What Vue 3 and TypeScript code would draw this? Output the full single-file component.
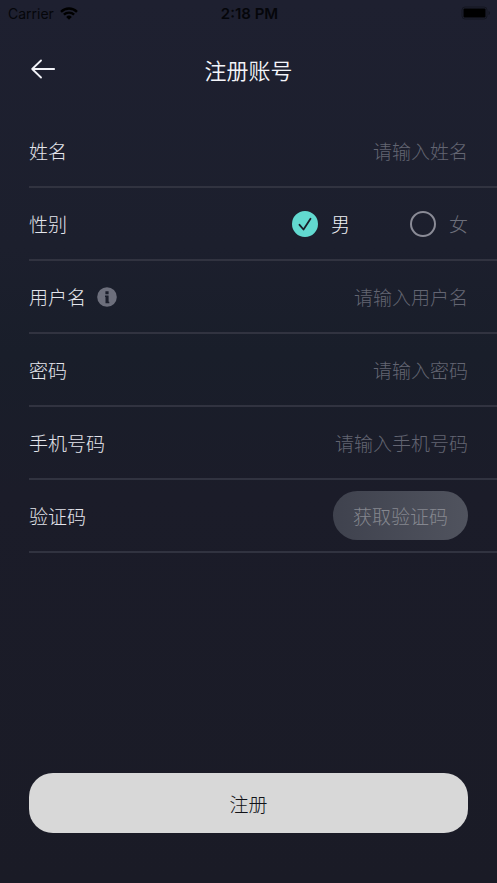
<script setup lang="ts">
import { reactive } from 'vue'

type Gender = 'male' | 'female'
type TextKey = 'name' | 'username' | 'password' | 'phone'

interface Field {
  key: TextKey | 'gender' | 'code'
  label: string
  placeholder?: string
  type?: string
  info?: boolean
}

const fields: Field[] = [
  { key: 'name', label: '姓名', placeholder: '请输入姓名', type: 'text' },
  { key: 'gender', label: '性别' },
  { key: 'username', label: '用户名', placeholder: '请输入用户名', type: 'text', info: true },
  { key: 'password', label: '密码', placeholder: '请输入密码', type: 'password' },
  { key: 'phone', label: '手机号码', placeholder: '请输入手机号码', type: 'tel' },
  { key: 'code', label: '验证码', type: 'text' },
]

const genders: { value: Gender; label: string }[] = [
  { value: 'male', label: '男' },
  { value: 'female', label: '女' },
]

const form = reactive({
  name: '',
  gender: 'male' as Gender,
  username: '',
  password: '',
  phone: '',
  code: '',
})
</script>

<template>
  <div class="screen">
    <div class="status">
      <div class="carrier">
        <span>Carrier</span>
        <svg class="wifi" viewBox="0 0 18 13" aria-hidden="true">
          <path d="M1 4.8a11.4 11.4 0 0 1 16 0" />
          <path d="M3.9 7.7a7.3 7.3 0 0 1 10.2 0" />
          <path class="solid" d="M9 12.8 6.2 9.9a4 4 0 0 1 5.6 0z" />
        </svg>
      </div>
      <span class="time">2:18 PM</span>
      <svg class="battery" viewBox="0 0 30 14" aria-hidden="true">
        <rect class="shell" x="1" y="1" width="25" height="12" rx="3" />
        <rect x="2.5" y="2.5" width="22" height="9" rx="1" />
        <path class="cap" d="M27.5 5v4q1.5-.6 1.5-2t-1.5-2z" />
      </svg>
    </div>

    <header class="header">
      <button class="back" type="button" aria-label="返回">
        <svg viewBox="0 0 24 20" aria-hidden="true">
          <path d="M23.2 10H1.2M10 1.5 1.2 10l8.8 8.5" />
        </svg>
      </button>
      <h1>注册账号</h1>
    </header>

    <form class="form" @submit.prevent>
      <div class="rows">
        <div v-for="f in fields" :key="f.key" class="row">
          <template v-if="f.key === 'gender'">
            <span id="gender-label" class="label">{{ f.label }}</span>
            <div class="genders" role="radiogroup" aria-labelledby="gender-label">
              <label v-for="g in genders" :key="g.value" class="option">
                <span class="mark">
                  <input v-model="form.gender" class="radio" type="radio" name="gender" :value="g.value" />
                  <svg class="tick" viewBox="0 0 26 26" aria-hidden="true">
                    <path d="M7.5 13.8 11.5 18.5 18.5 7.8" />
                  </svg>
                </span>
                <span class="option-text">{{ g.label }}</span>
              </label>
            </div>
          </template>
          <template v-else>
            <label class="label" :for="f.key">{{ f.label }}</label>
            <button v-if="f.info" class="info" type="button" aria-label="用户名说明">
              <svg viewBox="0 0 20 20" aria-hidden="true">
                <circle cx="10" cy="10" r="9.8" />
                <path d="M8.4 4.3h3.2v3H8.4zM8 8.6h3.6v6.2h.7v1.4H8.500v-6.300H8z" />
              </svg>
            </button>
            <input
              :id="f.key"
              v-model="form[f.key]"
              class="field"
              :type="f.type"
              :placeholder="f.placeholder"
            />
            <button v-if="f.key === 'code'" class="send" type="button">获取验证码</button>
          </template>
        </div>
      </div>
      <button class="submit" type="submit">注册</button>
    </form>
  </div>
</template>

<style>
body {
  margin: 0;
  background: #1a1b26;
}
</style>

<style scoped>
.screen {
  display: flex;
  flex-direction: column;
  min-height: 100vh;
  box-sizing: border-box;
  background: linear-gradient(180deg, #1e2030 0%, #1c1f2d 28%, #191e2a 40%, #1b1c29 56%, #1a1b26 100%);
  color: #e4e5ec;
  font-family: "Noto Sans CJK SC", sans-serif;
  font-size: 19px;
  font-weight: 300;
}

button,
input {
  margin: 0;
  padding: 0;
  border: 0;
  background: none;
  color: inherit;
  font: inherit;
}

button {
  cursor: pointer;
}

.status {
  display: grid;
  grid-template-columns: 1fr auto 1fr;
  align-items: center;
  height: 26px;
  padding: 0 6px 0 8px;
  color: #05060a;
  font-family: Inter, sans-serif;
  font-size: 14px;
  font-weight: 400;
}

.carrier {
  display: flex;
  align-items: center;
  gap: 6px;
}

.time {
  font-size: 15px;
  font-weight: 600;
}

.wifi {
  width: 18px;
  height: 13px;
  fill: none;
  stroke: #000;
  stroke-width: 2.4;
}

.wifi .solid {
  fill: #000;
  stroke: none;
}

.battery {
  justify-self: end;
  width: 30px;
  height: 14px;
}

.battery .shell {
  fill: none;
  stroke: #141620;
}

.battery .cap {
  fill: #141620;
}

.header {
  display: grid;
  grid-template-columns: 1fr auto 1fr;
  align-items: center;
  height: 86px;
  padding: 0 29px 3px;
}

.back {
  display: flex;
  align-items: center;
  width: 40px;
  height: 40px;
  padding-left: 2px;
}

.back svg {
  width: 24px;
  height: 20px;
  fill: none;
  stroke: #f2f3f8;
  stroke-width: 1.8;
  stroke-linecap: round;
  stroke-linejoin: round;
}

h1 {
  margin: 0;
  color: #f4f5fa;
  font-size: 22px;
  font-weight: 350;
  line-height: 32px;
}

.form {
  display: flex;
  flex: 1;
  flex-direction: column;
  justify-content: space-between;
  padding-bottom: 50px;
}

.rows {
  padding-left: 29px;
}

.row {
  display: flex;
  align-items: center;
  box-sizing: border-box;
  height: 73px;
  padding-right: 29px;
  border-bottom: 2px solid #313340;
}

.label {
  flex: none;
}

.info {
  flex: none;
  width: 20px;
  height: 20px;
  margin-left: 11px;
}

.info svg {
  display: block;
  width: 20px;
  height: 20px;
  fill: #6d6f7c;
}

.info path {
  fill: #1b1e2b;
}

.field {
  flex: 1;
  min-width: 0;
  height: 48px;
  outline: none;
  text-align: right;
}

.field::placeholder {
  color: #636572;
  opacity: 1;
}

.genders {
  display: flex;
  gap: 60px;
  margin-left: auto;
}

.option {
  display: flex;
  align-items: center;
  gap: 13px;
  cursor: pointer;
}

.mark {
  display: grid;
}

.radio,
.tick {
  grid-area: 1 / 1;
  width: 26px;
  height: 26px;
}

.radio {
  appearance: none;
  box-sizing: border-box;
  border: 2px solid #8a8b96;
  border-radius: 50%;
}

.radio:checked {
  border-color: #62d9d0;
  background: #62d9d0;
}

.tick {
  display: none;
  fill: none;
  stroke: #1b1e2b;
  stroke-width: 1.8;
  stroke-linecap: round;
  stroke-linejoin: round;
  pointer-events: none;
}

.radio:checked + .tick {
  display: block;
}

.option-text {
  color: #6d6f7b;
}

.option:has(.radio:checked) .option-text {
  color: #f0f1f6;
}

.send {
  flex: none;
  height: 49px;
  padding: 0 20px;
  border-radius: 25px;
  background: linear-gradient(90deg, #3f424e, #50535e);
  color: #85878f;
}

.submit {
  height: 60px;
  margin: 40px 29px 0;
  border-radius: 24px;
  background: #d8d8d8;
  color: #111217;
}
</style>
